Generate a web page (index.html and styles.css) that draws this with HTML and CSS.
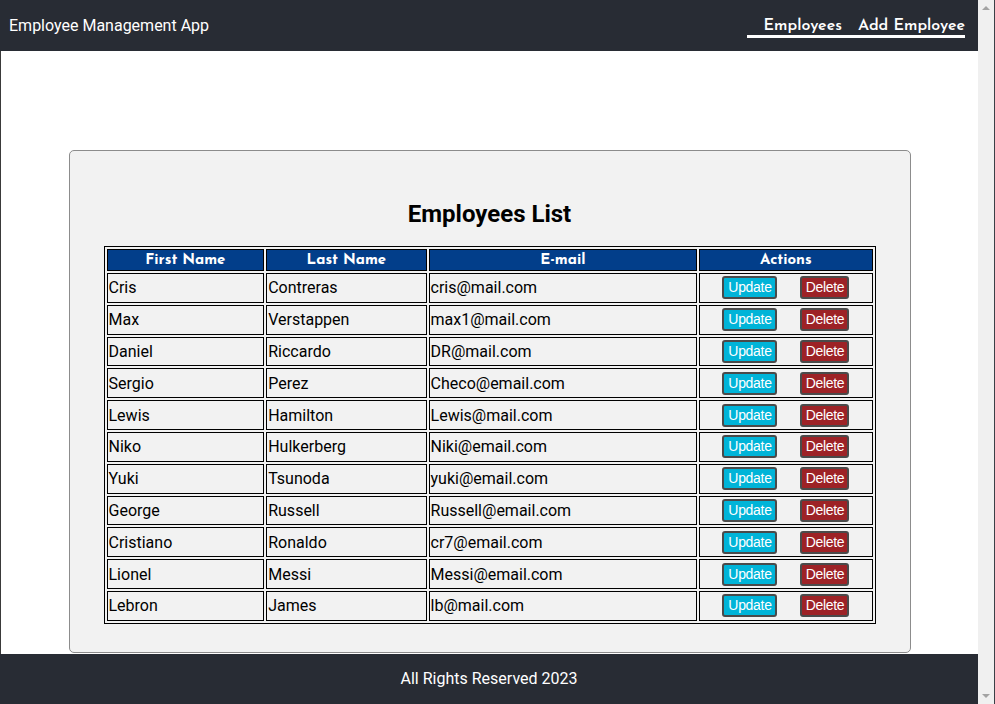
FILE: index.html
```html
<!DOCTYPE html>
<html lang="en">
<head>
<meta charset="utf-8">
<title>Employee Management App</title>
<link rel="stylesheet" href="styles.css">
</head>
<body>
<div class="window">
  <div class="page">
    <header class="topbar">
      <div class="brand">Employee Management App</div>
      <nav class="nav">
        <a class="nav-link" href="#">Employees</a>
        <a class="nav-link" href="#">Add Employee</a>
      </nav>
    </header>
    <main class="main">
      <section class="card">
        <h2 class="title">Employees List</h2>
        <table class="emp-table">
          <colgroup>
            <col class="c1"><col class="c2"><col class="c3"><col class="c4">
          </colgroup>
          <thead>
            <tr><th>First Name</th><th>Last Name</th><th>E-mail</th><th>Actions</th></tr>
          </thead>
          <tbody>
            <tr><td>Cris</td><td>Contreras</td><td>cris@mail.com</td><td class="actions"><div class="btns"><button class="btn btn-update">Update</button><button class="btn btn-delete">Delete</button></div></td></tr>
            <tr><td>Max</td><td>Verstappen</td><td>max1@mail.com</td><td class="actions"><div class="btns"><button class="btn btn-update">Update</button><button class="btn btn-delete">Delete</button></div></td></tr>
            <tr><td>Daniel</td><td>Riccardo</td><td>DR@mail.com</td><td class="actions"><div class="btns"><button class="btn btn-update">Update</button><button class="btn btn-delete">Delete</button></div></td></tr>
            <tr><td>Sergio</td><td>Perez</td><td>Checo@email.com</td><td class="actions"><div class="btns"><button class="btn btn-update">Update</button><button class="btn btn-delete">Delete</button></div></td></tr>
            <tr><td>Lewis</td><td>Hamilton</td><td>Lewis@mail.com</td><td class="actions"><div class="btns"><button class="btn btn-update">Update</button><button class="btn btn-delete">Delete</button></div></td></tr>
            <tr><td>Niko</td><td>Hulkerberg</td><td>Niki@email.com</td><td class="actions"><div class="btns"><button class="btn btn-update">Update</button><button class="btn btn-delete">Delete</button></div></td></tr>
            <tr><td>Yuki</td><td>Tsunoda</td><td>yuki@email.com</td><td class="actions"><div class="btns"><button class="btn btn-update">Update</button><button class="btn btn-delete">Delete</button></div></td></tr>
            <tr><td>George</td><td>Russell</td><td>Russell@email.com</td><td class="actions"><div class="btns"><button class="btn btn-update">Update</button><button class="btn btn-delete">Delete</button></div></td></tr>
            <tr><td>Cristiano</td><td>Ronaldo</td><td>cr7@email.com</td><td class="actions"><div class="btns"><button class="btn btn-update">Update</button><button class="btn btn-delete">Delete</button></div></td></tr>
            <tr><td>Lionel</td><td>Messi</td><td>Messi@email.com</td><td class="actions"><div class="btns"><button class="btn btn-update">Update</button><button class="btn btn-delete">Delete</button></div></td></tr>
            <tr><td>Lebron</td><td>James</td><td>lb@mail.com</td><td class="actions"><div class="btns"><button class="btn btn-update">Update</button><button class="btn btn-delete">Delete</button></div></td></tr>
          </tbody>
        </table>
      </section>
    </main>
    <footer class="footer">All Rights Reserved 2023</footer>
  </div>
  <div class="scrollbar" aria-hidden="true">
    <span class="arrow arrow-up"></span>
    <span class="arrow arrow-down"></span>
  </div>
</div>
</body>
</html>
```
FILE: styles.css
```css
html, body {
  margin: 0;
  padding: 0;
}
body {
  font-family: Roboto, "Liberation Sans", sans-serif;
  background: #ffffff;
  color: #000000;
}
.window {
  display: flex;
  height: 100vh;
  overflow: hidden;
}
.page {
  flex: 1;
  min-width: 0;
  display: flex;
  flex-direction: column;
  overflow: hidden;
}
.topbar {
  flex: none;
  height: 51px;
  background: #282c34;
  color: #ffffff;
  display: flex;
  align-items: center;
  justify-content: space-between;
  padding: 0 12px 0 9px;
}
.brand {
  font-size: 16px;
}
.nav {
  display: flex;
  gap: 16px;
  padding: 5px 0 0 17px;
  margin-right: 1px;
  border-bottom: 3px solid #ffffff;
  font-family: "Josefin Sans", Jost, Lato, sans-serif;
  font-size: 16px;
  font-weight: 600;
}
.nav-link {
  color: #ffffff;
  text-decoration: none;
  line-height: 17px;
}
.main {
  flex: 1;
  min-height: 0;
  overflow: hidden;
  border-left: 1px solid #3a3a3a;
  padding-top: 99px;
}
.card {
  width: 842px;
  box-sizing: border-box;
  margin: 0 auto;
  background: #f2f2f2;
  border: 1px solid #8c8c8c;
  border-radius: 5px;
  padding: 29px 34px 28px;
}
.title {
  text-align: center;
  font-size: 24px;
  font-weight: 700;
  margin: 20px 0 18px;
}
.emp-table {
  width: 100%;
  table-layout: fixed;
  border-collapse: separate;
  border-spacing: 2px;
  border: 1px solid #000000;
}
.c1 { width: 20.75%; }
.c2 { width: 21.1%; }
.c3 { width: 35.35%; }
.c4 { width: 22.8%; }
.emp-table th {
  background: #023e8a;
  color: #ffffff;
  font-family: "Josefin Sans", Jost, Lato, sans-serif;
  font-weight: 700;
  font-size: 15px;
  border: 1px solid #000000;
  padding: 1px 1px 0;
  height: 18px;
  line-height: 19px;
}
.emp-table td {
  border: 1px solid #000000;
  padding: 0 1px;
  height: 27.8px;
  font-size: 16px;
  vertical-align: middle;
  white-space: nowrap;
  overflow: hidden;
}
.btns {
  display: flex;
  justify-content: center;
  gap: 23px;
}
.btn {
  height: 23px;
  box-sizing: border-box;
  border: 2px solid #4a4a4a;
  border-radius: 3px;
  padding: 0 3px 0 4px;
  color: #ffffff;
  font-family: "Liberation Sans", Arial, sans-serif;
  font-size: 14px;
  letter-spacing: -0.3px;
  line-height: 19px;
}
.btn-update {
  background: #00b4d8;
}
.btn-delete {
  background: #9d2226;
}
.footer {
  flex: none;
  height: 50px;
  line-height: 50px;
  background: #282c34;
  color: #ffffff;
  text-align: center;
  font-size: 16px;
}
.scrollbar {
  flex: none;
  width: 16px;
  background: #f0f0f0;
  border-right: 1px solid #3b4047;
  display: flex;
  flex-direction: column;
  justify-content: space-between;
  align-items: center;
  padding: 6px 0 6px;
}
.arrow {
  width: 0;
  height: 0;
  border-left: 4px solid transparent;
  border-right: 4px solid transparent;
}
.arrow-up {
  border-bottom: 4px solid #a3a3a3;
}
.arrow-down {
  border-top: 4px solid #a3a3a3;
}
```
